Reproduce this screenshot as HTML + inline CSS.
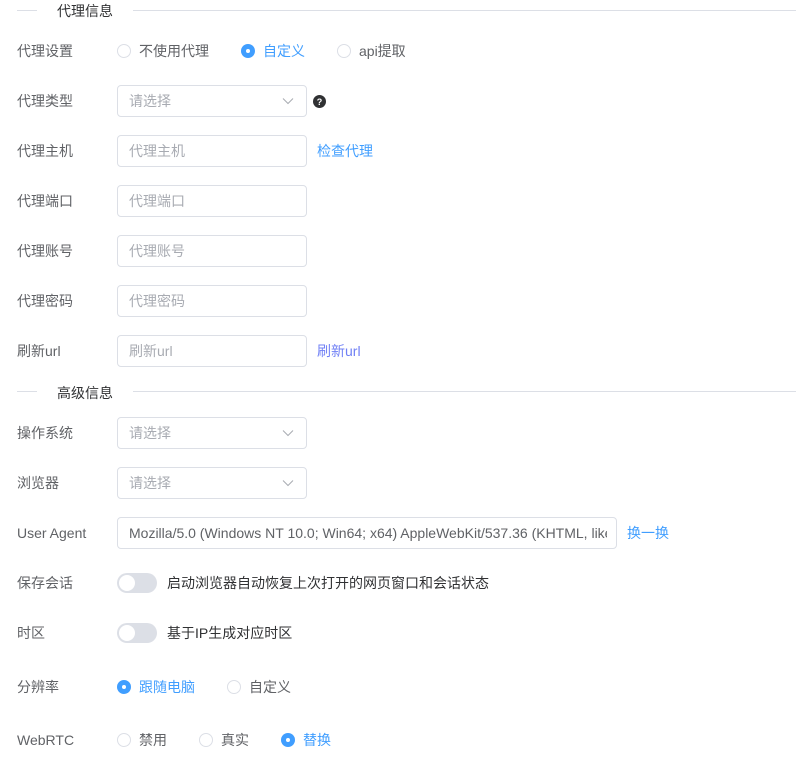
<!DOCTYPE html>
<html><head><meta charset="utf-8"><style>
*{margin:0;padding:0;box-sizing:border-box}
body{width:796px;height:777px;background:#fff;position:relative;overflow:hidden;font-family:"Liberation Sans","Noto Sans CJK SC",sans-serif;font-size:14px;color:#606266}
#w{position:absolute;left:0;top:1px;width:796px;height:776px}
.a{position:absolute}
.lbl{position:absolute;left:17px;line-height:20px;color:#606266}
.inp{position:absolute;left:117px;width:190px;height:32px;border:1px solid #dcdfe6;border-radius:4px;padding-left:11px;line-height:30px;color:#a8abb2;background:#fff}
.chev{position:absolute;right:12px;top:11px;width:12px;height:8px}
.r{position:absolute;width:14px;height:14px;border:1px solid #dcdfe6;border-radius:50%;background:#fff}
.r.on{border:none;background:#409eff}
.r.on::after{content:"";position:absolute;left:5px;top:5px;width:4px;height:4px;border-radius:50%;background:#fff}
.t{position:absolute;line-height:20px}
.blue{color:#409eff}
.tog{position:absolute;left:117px;width:40px;height:20px;border-radius:10px;background:#dcdfe6}
.tog::after{content:"";position:absolute;left:2px;top:2px;width:16px;height:16px;border-radius:50%;background:#fff}
.line{position:absolute;height:1px;background:#dcdfe6}
</style></head><body><div id="w">
<div class="line" style="left:17px;top:9px;width:20px"></div>
<div class="t" style="left:57px;top:0px;color:#303133">代理信息</div>
<div class="line" style="left:133px;top:9px;width:663px"></div>

<div class="lbl" style="top:40px">代理设置</div>
<div class="r" style="left:117px;top:43px"></div><div class="t" style="left:139px;top:40px">不使用代理</div>
<div class="r on" style="left:241px;top:43px"></div><div class="t blue" style="left:263px;top:40px">自定义</div>
<div class="r" style="left:337px;top:43px"></div><div class="t" style="left:359px;top:40px">api提取</div>

<div class="lbl" style="top:90px">代理类型</div>
<div class="inp" style="top:84px">请选择<svg class="chev" viewBox="0 0 12 8"><path d="M1 1.5L6 6.5L11 1.5" fill="none" stroke="#a8abb2" stroke-width="1"/></svg></div>
<svg class="a" style="left:313px;top:94px" width="13" height="13" viewBox="0 0 13 13"><circle cx="6.5" cy="6.5" r="6.5" fill="#303133"/><text x="6.5" y="10" font-size="9" font-weight="bold" fill="#fff" text-anchor="middle" font-family="Liberation Sans">?</text></svg>

<div class="lbl" style="top:140px">代理主机</div>
<div class="inp" style="top:134px">代理主机</div>
<div class="t blue" style="left:317px;top:140px">检查代理</div>

<div class="lbl" style="top:190px">代理端口</div>
<div class="inp" style="top:184px">代理端口</div>

<div class="lbl" style="top:240px">代理账号</div>
<div class="inp" style="top:234px">代理账号</div>

<div class="lbl" style="top:290px">代理密码</div>
<div class="inp" style="top:284px">代理密码</div>

<div class="lbl" style="top:340px">刷新url</div>
<div class="inp" style="top:334px">刷新url</div>
<div class="t" style="left:317px;top:340px;color:#7080f5">刷新url</div>

<div class="line" style="left:17px;top:390px;width:20px"></div>
<div class="t" style="left:57px;top:382px;color:#303133">高级信息</div>
<div class="line" style="left:133px;top:390px;width:663px"></div>

<div class="lbl" style="top:422px">操作系统</div>
<div class="inp" style="top:416px">请选择<svg class="chev" viewBox="0 0 12 8"><path d="M1 1.5L6 6.5L11 1.5" fill="none" stroke="#a8abb2" stroke-width="1"/></svg></div>

<div class="lbl" style="top:472px">浏览器</div>
<div class="inp" style="top:466px">请选择<svg class="chev" viewBox="0 0 12 8"><path d="M1 1.5L6 6.5L11 1.5" fill="none" stroke="#a8abb2" stroke-width="1"/></svg></div>

<div class="lbl" style="top:522px">User Agent</div>
<div class="inp" style="top:516px;width:500px;color:#606266;white-space:nowrap;overflow:hidden;padding-right:10px"><span style="display:block;overflow:hidden;width:478px">Mozilla/5.0 (Windows NT 10.0; Win64; x64) AppleWebKit/537.36 (KHTML, like Gecko)</span></div>
<div class="t blue" style="left:627px;top:522px">换一换</div>

<div class="lbl" style="top:572px">保存会话</div>
<div class="tog" style="top:572px"></div>
<div class="t" style="left:167px;top:572px;color:#303133">启动浏览器自动恢复上次打开的网页窗口和会话状态</div>

<div class="lbl" style="top:622px">时区</div>
<div class="tog" style="top:622px"></div>
<div class="t" style="left:167px;top:622px;color:#303133">基于IP生成对应时区</div>

<div class="lbl" style="top:676px">分辨率</div>
<div class="r on" style="left:117px;top:679px"></div><div class="t blue" style="left:139px;top:676px">跟随电脑</div>
<div class="r" style="left:227px;top:679px"></div><div class="t" style="left:249px;top:676px">自定义</div>

<div class="lbl" style="top:729px">WebRTC</div>
<div class="r" style="left:117px;top:732px"></div><div class="t" style="left:139px;top:729px">禁用</div>
<div class="r" style="left:199px;top:732px"></div><div class="t" style="left:221px;top:729px">真实</div>
<div class="r on" style="left:281px;top:732px"></div><div class="t blue" style="left:303px;top:729px">替换</div>
</div></body></html>
